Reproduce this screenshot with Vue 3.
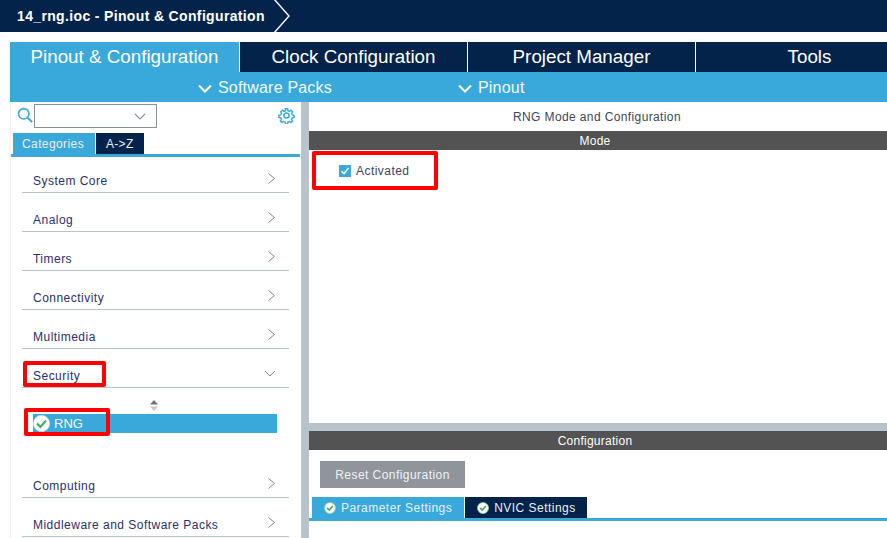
<script setup>
const tabs = [
  { label: 'Pinout & Configuration', width: 229, active: true },
  { label: 'Clock Configuration', width: 228 },
  { label: 'Project Manager', width: 228 },
  { label: 'Tools', width: 228 }
]

const before = ['System Core', 'Analog', 'Timers', 'Connectivity', 'Multimedia']
const after = ['Computing', 'Middleware and Software Packs']
</script>

<template>
  <div class="page">
    <header class="crumb">
      <span class="crumb-text">14_rng.ioc - Pinout &amp; Configuration</span>
      <svg class="crumb-arrow" width="18" height="32" viewBox="0 0 18 32">
        <path d="M1 -1 L16 16 L1 33" fill="none" stroke="#fff" stroke-width="1.4" />
      </svg>
    </header>

    <div class="shell">
      <nav class="tabs">
        <div
          v-for="tab in tabs"
          :key="tab.label"
          class="tab"
          :class="{ active: tab.active }"
          :style="{ width: tab.width + 'px' }"
        >{{ tab.label }}</div>
      </nav>

      <div class="subbar">
        <div class="sub sub-packs">
          <svg width="14" height="9" viewBox="0 0 14 9"><path d="M1 1.5 L7 7.5 L13 1.5" fill="none" stroke="#fff" stroke-width="2" /></svg>
          <span>Software Packs</span>
        </div>
        <div class="sub sub-pinout">
          <svg width="14" height="9" viewBox="0 0 14 9"><path d="M1 1.5 L7 7.5 L13 1.5" fill="none" stroke="#fff" stroke-width="2" /></svg>
          <span>Pinout</span>
        </div>
      </div>

      <div class="body">
        <aside class="side">
          <div class="search">
            <svg class="glass" width="16" height="16" viewBox="0 0 16 16">
              <circle cx="6.8" cy="6.8" r="5.2" fill="none" stroke="#39a9dc" stroke-width="1.6" />
              <path d="M10.6 10.6 L15 15" stroke="#39a9dc" stroke-width="2" />
            </svg>
            <div class="select">
              <svg width="12" height="7" viewBox="0 0 12 7"><path d="M1 1 L6 6 L11 1" fill="none" stroke="#8a9299" stroke-width="1.2" /></svg>
            </div>
            <svg class="gear" width="17" height="17" viewBox="0 0 24 24" fill="none" stroke="#39a9dc" stroke-width="2.2">
              <circle cx="12" cy="12" r="3.6" />
              <path d="M10.2 1.5h3.6l.5 3 2.3 1 2.5-1.8 2.6 2.6-1.8 2.5 1 2.3 3 .5v3.6l-3 .5-1 2.3 1.8 2.5-2.6 2.6-2.5-1.8-2.3 1-.5 3h-3.6l-.5-3-2.3-1-2.5 1.8-2.6-2.6 1.8-2.5-1-2.3-3-.5v-3.6l3-.5 1-2.3L3 6.3l2.6-2.6 2.5 1.8 2.3-1z" transform="translate(1.2 1.2) scale(.9)" />
            </svg>
          </div>

          <div class="side-tabs">
            <div class="side-tab on">Categories</div>
            <div class="side-tab">A-&gt;Z</div>
          </div>

          <div class="list">
            <div v-for="name in before" :key="name" class="row">
              <span>{{ name }}</span>
              <svg width="7" height="11" viewBox="0 0 7 11"><path d="M.5 .5 L6.5 5.5 L.5 10.5" fill="none" stroke="#7d858c" stroke-width="1" /></svg>
            </div>
            <div class="row">
              <span>Security</span>
              <svg class="down" width="12" height="8" viewBox="0 0 12 8"><path d="M1 1 L6 6 L11 1" fill="none" stroke="#7d858c" stroke-width="1" /></svg>
              <div class="mark mark-security"></div>
            </div>
            <div class="expanded">
              <svg class="sorter" width="10" height="11" viewBox="0 0 10 11">
                <path d="M5 0 L9 4.5 H1 Z" fill="#6e7378" />
                <path d="M5 11 L9 6.5 H1 Z" fill="#c4c8cb" />
              </svg>
              <div class="picked">
                <svg width="17" height="17" viewBox="0 0 17 17">
                  <circle cx="8.5" cy="8.5" r="8.2" fill="#fff" stroke="#cfd6da" stroke-width=".6" />
                  <path d="M4 8.5 L7.4 12 L13 5.6" fill="none" stroke="#41a85f" stroke-width="2.2" />
                </svg>
                <span>RNG</span>
              </div>
              <div class="mark mark-rng"></div>
            </div>
            <div v-for="name in after" :key="name" class="row">
              <span>{{ name }}</span>
              <svg width="7" height="11" viewBox="0 0 7 11"><path d="M.5 .5 L6.5 5.5 L.5 10.5" fill="none" stroke="#7d858c" stroke-width="1" /></svg>
            </div>
          </div>
        </aside>

        <main class="right">
          <section class="mode">
            <div class="title">RNG Mode and Configuration</div>
            <div class="band">Mode</div>
            <div class="check-line">
              <span class="box">
                <svg width="12" height="12" viewBox="0 0 12 12"><path d="M2.5 6.2 L5 8.8 L9.5 3" fill="none" stroke="#fff" stroke-width="1.4" /></svg>
              </span>
              <span>Activated</span>
              <div class="mark mark-activated"></div>
            </div>
          </section>
          <section class="config">
            <div class="band">Configuration</div>
            <button class="reset" type="button">Reset Configuration</button>
            <div class="cfg-tabs">
              <div class="cfg-tab on">
                <svg width="12" height="12" viewBox="0 0 12 12"><circle cx="6" cy="6" r="5.5" fill="#fff" stroke="#8fc9a5" stroke-width=".8" /><path d="M3.2 6 L5.2 8.1 L8.8 4" fill="none" stroke="#41a85f" stroke-width="1.6" /></svg>
                <span>Parameter Settings</span>
              </div>
              <div class="cfg-tab">
                <svg width="12" height="12" viewBox="0 0 12 12"><circle cx="6" cy="6" r="5.5" fill="#fff" stroke="#8fc9a5" stroke-width=".8" /><path d="M3.2 6 L5.2 8.1 L8.8 4" fill="none" stroke="#41a85f" stroke-width="1.6" /></svg>
                <span>NVIC Settings</span>
              </div>
            </div>
          </section>
        </main>
      </div>
    </div>
  </div>
</template>

<style>
html, body { margin: 0; background: #fff; overflow: hidden; }
</style>

<style scoped>
.page { width: 887px; height: 538px; overflow: hidden; background: #fff; font-family: "Liberation Sans", Arial, sans-serif; }

.crumb { height: 32px; background: #03234b; display: flex; align-items: center; padding-left: 17px; color: #fff; }
.crumb-text { font-size: 14px; font-weight: 700; letter-spacing: .35px; }
.crumb-arrow { margin-left: 8px; }

.shell { margin-top: 10px; padding-left: 10px; }
.tabs { display: flex; height: 30px; }
.tab { flex: none; box-sizing: border-box; background: #03234b; color: #fff; font-size: 18.8px; line-height: 30px; text-align: center; border-left: 1px solid #fff; }
.tab:first-child { border-left: 0; }
.tab.active { background: #39a9dc; }

.subbar { box-sizing: border-box; height: 30px; padding-top: 2px; background: #39a9dc; display: flex; align-items: center; color: #f2f9fd; font-size: 16px; letter-spacing: .2px; }
.sub { display: flex; align-items: center; gap: 6px; }
.sub-packs { margin-left: 188px; }
.sub-pinout { margin-left: 126px; }

.body { display: flex; height: 436px; }

.side { box-sizing: border-box; width: 291px; border-left: 1px solid #f0f2f3; }
.search { display: flex; align-items: center; height: 26px; padding-left: 6px; }
.glass { margin-right: 1px; }
.select { box-sizing: border-box; width: 123px; height: 24px; margin-top: 2px; border: 1px solid #8a9299; display: flex; align-items: center; justify-content: flex-end; padding-right: 10px; }
.gear { margin-left: auto; margin-right: 6px; }

.side-tabs { display: flex; margin-top: 5px; margin-right: 1px; gap: 1px; border-bottom: 3px solid #39a9dc; padding-left: 2px; height: 21px; }
.side-tab { height: 21px; background: #03234b; color: #e9eef3; font-size: 12px; line-height: 22px; padding: 0 10px; letter-spacing: .3px; }
.side-tab.on { background: #39a9dc; width: 73px; padding: 0 0 0 9px; letter-spacing: .4px; }

.list { padding: 0 12px 0 11px; }
.row { position: relative; box-sizing: border-box; height: 39px; border-bottom: 1px solid #b8c4cb; display: flex; align-items: flex-end; justify-content: space-between; padding: 0 14px 3px 11px; color: #2b2f6b; font-size: 12px; letter-spacing: .48px; line-height: 15px; }
.row:first-child { height: 36px; }
.row svg { margin-bottom: 5px; }
.row svg.down { margin-right: -1px; margin-bottom: 6px; }

.expanded { position: relative; height: 71px; padding-top: 12px; box-sizing: border-box; }
.sorter { display: block; margin-left: 127px; }
.picked { height: 19px; width: 244px; margin-top: 3px; margin-left: 11px; background: #39a9dc; color: #f4fafd; font-size: 13px; display: flex; align-items: center; gap: 4px; }

.mark { position: absolute; border: 4px solid #fe0000; border-radius: 2px; box-sizing: border-box; pointer-events: none; }
.mark-security { left: 1px; top: 12px; width: 83px; height: 26px; }
.mark-rng { left: 2px; top: 20px; width: 86px; height: 28px; }
.mark-activated { left: 3px; top: 1px; width: 126px; height: 39px; }

.right { width: 578px; margin-left: 8px; display: flex; flex-direction: column; position: relative; box-sizing: border-box; height: 436px; }
.right::before { content: ""; position: absolute; left: -8px; top: 0; bottom: 0; width: 8px; background: #b8c4cb; }
.mode { height: 321px; border-bottom: 8px solid #b8c4cb; }
.title { height: 29px; line-height: 30px; text-align: center; color: #3f4654; font-size: 12px; letter-spacing: .38px; padding-right: 2px; }
.band { height: 19px; line-height: 20px; background: #525352; color: #fff; text-align: center; font-size: 12px; letter-spacing: .25px; padding-right: 6px; }
.check-line { position: relative; box-sizing: border-box; display: flex; align-items: center; gap: 5px; height: 39px; padding: 2px 0 0 30px; color: #3e4560; font-size: 12px; letter-spacing: .45px; }
.box { width: 12px; height: 12px; background: #39a9dc; display: flex; }

.config { flex: 1; }
.reset { display: block; margin: 11px 0 0 11px; width: 145px; height: 27px; border: 0; background: #8f959b; color: #f1f2f3; font: 12px "Liberation Sans", Arial, sans-serif; letter-spacing: .45px; padding: 0; }
.cfg-tabs { display: flex; gap: 1px; margin-top: 9px; height: 21px; padding-left: 3px; border-bottom: 3px solid #39a9dc; }
.cfg-tab { display: flex; align-items: center; gap: 5px; background: #03234b; color: #e9eef3; font-size: 12px; letter-spacing: .47px; height: 21px; padding: 0 11px 0 12px; }
.cfg-tab.on { background: #39a9dc; padding-right: 12px; }
</style>
